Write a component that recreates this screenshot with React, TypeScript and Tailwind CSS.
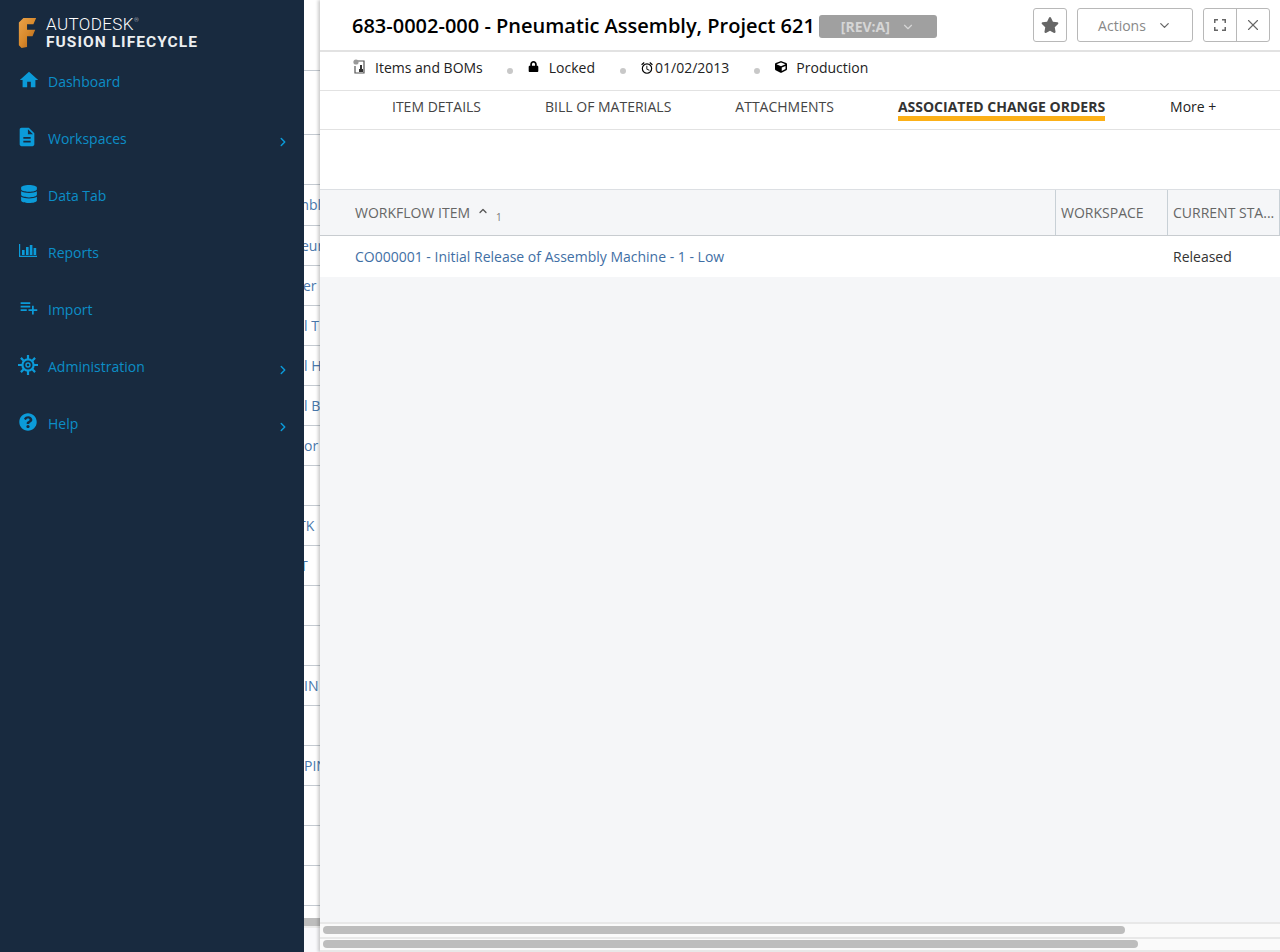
import { ChevronDown, ChevronRight, ChevronUp, X } from "lucide-react";
import { FaCube, FaDatabase, FaLock, FaQuestionCircle, FaStar } from "react-icons/fa";
import { MdDescription, MdHome, MdOutlineAlarm, MdPlaylistAdd } from "react-icons/md";

const ReportsIcon = () => (
  <svg width="18" height="13" viewBox="0 0 18 13" fill="currentColor" className="ml-[1px]">
    <path d="M0 0h1.2v11.8H18V13H0z" />
    <path d="M3 6h2.6v5H3zM7 3h2.6v8H7zM10.8 1h2.6v10h-2.6zM14.6 4h2.6v7h-2.6z" />
  </svg>
);

const GearIcon = () => (
  <svg width="20" height="20" viewBox="0 0 20 20" fill="none" stroke="currentColor">
    <circle cx="10" cy="10" r="5.6" strokeWidth="2.2" />
    <circle cx="10" cy="10" r="2" strokeWidth="1.4" />
    <path
      d="M10 0v4M10 16v4M0 10h4M16 10h4M2.9 2.9l2.8 2.8M14.3 14.3l2.8 2.8M2.9 17.1l2.8-2.8M14.3 5.7l2.8-2.8"
      strokeWidth="2.2"
    />
  </svg>
);

const navItems = [
  { label: "Dashboard", icon: <MdHome size={22} />, arrow: false },
  { label: "Workspaces", icon: <MdDescription size={22} className="-ml-[2px]" />, arrow: true },
  { label: "Data Tab", icon: <FaDatabase size={18} className="ml-[2px]" />, arrow: false },
  { label: "Reports", icon: <ReportsIcon />, arrow: false },
  { label: "Import", icon: <MdPlaylistAdd size={21} />, arrow: false },
  { label: "Administration", icon: <GearIcon />, arrow: true },
  { label: "Help", icon: <FaQuestionCircle size={18} className="ml-[1px]" />, arrow: true },
];

// rows of the list behind the open panel, only a sliver of it shows
const behindRows = [
  { text: "", cls: "h-[71px]" },
  { text: "", cls: "h-[64px]" },
  { text: "", cls: "h-[50px]" },
  { text: "mbly", cls: "h-[41px] -ml-[8px]" },
  { text: "eur", cls: "h-[40px] -ml-[3px]" },
  { text: "er", cls: "h-[40px] -ml-[1px]" },
  { text: "l T", cls: "h-[40px]" },
  { text: "l H", cls: "h-[40px]" },
  { text: "l B", cls: "h-[40px]" },
  { text: "or", cls: "h-[40px]" },
  { text: "", cls: "h-[40px]" },
  { text: "TK", cls: "h-[40px] -ml-[6px]" },
  { text: "T", cls: "h-[40px] -ml-[4px]" },
  { text: "", cls: "h-[40px]" },
  { text: "", cls: "h-[40px]" },
  { text: "IN", cls: "h-[40px]" },
  { text: "", cls: "h-[40px]" },
  { text: "PIN", cls: "h-[40px]" },
  { text: "", cls: "h-[40px]" },
  { text: "", cls: "h-[40px]" },
  { text: "", cls: "h-[40px]" },
];

const tabs = ["ITEM DETAILS", "BILL OF MATERIALS", "ATTACHMENTS"];

const Sidebar = () => {
  return (
    <div className="w-[304px] shrink-0 bg-[#182a3f] z-20">
      <div className="flex h-[64px] pl-[18px] pt-[15px]">
        <svg width="19" height="33" viewBox="0 0 19 33" className="mt-[3px] h-[30px]">
          <defs>
            <linearGradient id="fusionF" x1="0" y1="0" x2="1" y2="1">
              <stop offset="0" stopColor="#e9a24a" />
              <stop offset="0.5" stopColor="#d98a2c" />
              <stop offset="1" stopColor="#a85c16" />
            </linearGradient>
          </defs>
          <path
            d="M0 5 L5 0 H19 L16 7 H9 V13 H18 L15 20 H9 V32 L3 33 L0 30 Z"
            fill="url(#fusionF)"
          />
        </svg>
        <div className="ml-[9px] font-['Roboto',sans-serif] text-white">
          <div className="flex items-start text-[17px] leading-[17px] font-light tracking-[0.4px] mt-[1px]">
            AUTODESK
            <span className="text-[6px] leading-[8px] opacity-70">®</span>
          </div>
          <div className="whitespace-nowrap text-[15.5px] leading-[18px] font-bold tracking-[1.05px] text-[#eceff1]">
            FUSION LIFECYCLE
          </div>
        </div>
      </div>
      <div className="pt-[1px]">
        {navItems.map((item) => (
          <div key={item.label} className="flex h-[57px] pl-[18px] pr-[14px] pt-[5px] text-[#0c8ec7]">
            <div className="flex h-[19px] w-[30px] items-center justify-start text-[#0b9bd9]">
              {item.icon}
            </div>
            <span className="text-sm leading-[24px]">{item.label}</span>
            {item.arrow && (
              <ChevronRight size={14} strokeWidth={2.5} className="ml-auto mt-[8px] text-[#0b9bd9]" />
            )}
          </div>
        ))}
      </div>
    </div>
  );
};

const BehindList = () => {
  return (
    <div className="w-4 shrink-0 overflow-hidden bg-white">
      {behindRows.map((row, i) => (
        <div
          key={i}
          className={`flex items-center overflow-hidden whitespace-nowrap border-b border-[#c4cad1] text-sm text-[#4a78ac] ${row.cls}`}
        >
          {row.text}
        </div>
      ))}
      <div className="mt-[12px] h-[8px] bg-[#bdbdbd]" />
      <div className="h-[26px] border-t-2 border-[#ececec] bg-[#f9f9fc]" />
    </div>
  );
};

const Dot = () => <span className="ml-6 mr-[14px] mt-[5px] h-[6px] w-[6px] rounded-full bg-[#c8c8c8]" />;

const Header = () => {
  return (
    <div className="flex h-[52px] items-start border-b-2 border-[#e2e2e2] pl-8 pr-[10px]">
      <h1 className="mt-[11px] whitespace-nowrap text-xl leading-[30px] font-semibold text-black">
        683-0002-000 - Pneumatic Assembly, Project 621
      </h1>
      <div className="ml-[4px] mt-[15px] flex h-[23px] w-[118px] items-center justify-center gap-[11px] rounded-[3px] bg-[#a0a0a0] text-sm font-bold text-[#d6d6d6]">
        [REV:A]
        <ChevronDown size={14} />
      </div>
      <button className="ml-auto mt-2 flex h-[34px] w-[34px] items-center justify-center rounded-[3px] border border-[#b8b8b8] text-[#666]">
        <FaStar size={18} />
      </button>
      <button className="ml-[10px] mt-2 flex h-[34px] w-[116px] items-center justify-center gap-[11px] rounded-[3px] border border-[#b8b8b8] pt-[1px] text-sm text-[#888]">
        Actions
        <ChevronDown size={15} className="text-[#666]" />
      </button>
      <div className="ml-[10px] mt-2 flex h-[34px] rounded-[3px] border border-[#b8b8b8] text-[#666]">
        <div className="flex w-[33px] items-center justify-center border-r border-[#b8b8b8]">
          <svg width="12" height="12" viewBox="0 0 12 12" fill="none" stroke="currentColor" strokeWidth="1.5">
            <path d="M.75 4V.75H4M8 .75h3.25V4M11.25 8v3.25H8M4 11.25H.75V8" />
          </svg>
        </div>
        <div className="flex w-[32px] items-center justify-center">
          <X size={18} strokeWidth={1.5} />
        </div>
      </div>
    </div>
  );
};

const InfoRow = () => {
  return (
    <div className="flex h-[39px] items-center border-b border-[#e2e2e2] pb-[6px] pl-[33px] text-sm text-[#222]">
      <svg width="14" height="16" viewBox="0 0 14 16" className="mr-[8px] -mt-[3px]">
        <path d="M4 2h7v12H2V7" fill="none" stroke="#555" strokeWidth="1.2" />
        <circle cx="3" cy="3" r="2.6" fill="#999" />
        <path d="M6 13v-3h1V6h2v4h1v3z" fill="#333" />
      </svg>
      Items and BOMs
      <Dot />
      <span className="-mt-[3px] ml-[1px] text-black">
        <FaLock size={11} />
      </span>
      <span className="ml-[10px]">Locked</span>
      <span className="ml-[1px] flex">
        <Dot />
      </span>
      <MdOutlineAlarm size={14} className="mr-[1px] text-black" />
      01/02/2013
      <span className="ml-[1px] flex">
        <Dot />
      </span>
      <span className="-mt-[3px] ml-[1px] text-black">
        <FaCube size={12} />
      </span>
      <span className="ml-[9px]">Production</span>
    </div>
  );
};

const Tabs = () => {
  return (
    <div className="flex h-[39px] gap-16 border-b border-[#e2e2e2] pl-[72px] text-sm text-[#444]">
      {tabs.map((tab) => (
        <div key={tab} className="pt-[5px] leading-[21px] whitespace-nowrap">
          {tab}
        </div>
      ))}
      <div className="h-[30px] border-b-[5px] border-[#fcb017] pt-[5px] leading-[21px] font-bold whitespace-nowrap text-[#333]">
        ASSOCIATED CHANGE ORDERS
      </div>
      <div className="pl-[1px] pt-[5px] leading-[21px] whitespace-nowrap text-[#222]">More +</div>
    </div>
  );
};

const Table = () => {
  return (
    <div className="flex flex-1 flex-col">
      <div className="grid h-[47px] grid-cols-[736px_112px_112px] border-y border-t-[#dcdfe3] border-b-[#c8ccd0] bg-[#f5f6f8] text-sm text-[#666]">
        <div className="flex items-center border-r border-[#c8d0d6] pl-[35px]">
          WORKFLOW ITEM
          <ChevronUp size={12} strokeWidth={2.5} className="ml-[7px] -mt-[3px] text-[#555]" />
          <span className="ml-[7px] mt-[9px] text-[10px] text-[#777]">1</span>
        </div>
        <div className="flex items-center border-r border-[#c8d0d6] pl-[5px]">WORKSPACE</div>
        <div className="flex items-center border-r border-[#c8d0d6] pl-[5px] whitespace-nowrap">CURRENT STA...</div>
      </div>
      <div className="grid h-[41px] grid-cols-[736px_112px_112px] items-center bg-white text-sm">
        <div className="pl-[35px] text-[#3f6fa5]">CO000001 - Initial Release of Assembly Machine - 1 - Low</div>
        <div />
        <div className="pl-[5px] text-[#333]">Released</div>
      </div>
      <div className="flex-1 bg-[#f5f6f8]" />
      <div className="h-[15px] border-t-2 border-[#e8e8e8] bg-[#fafafa] pl-[3px] pt-[2px]">
        <div className="h-[8px] w-[802px] rounded bg-[#bdbdbd]" />
      </div>
      <div className="h-[15px] border-y-2 border-[#e8e8e8] bg-[#fafafa] pl-[3px] pt-[1px]">
        <div className="h-[8px] w-[815px] rounded bg-[#bdbdbd]" />
      </div>
    </div>
  );
};

export default function App() {
  return (
    <div className="flex h-[952px] w-[1280px] overflow-hidden font-['Open_Sans',sans-serif]">
      <Sidebar />
      <BehindList />
      <div className="z-10 flex flex-1 flex-col bg-white shadow-[-2px_0_3px_rgba(0,0,0,0.2)]">
        <Header />
        <InfoRow />
        <Tabs />
        <div className="h-[59px]" />
        <Table />
      </div>
    </div>
  );
}
